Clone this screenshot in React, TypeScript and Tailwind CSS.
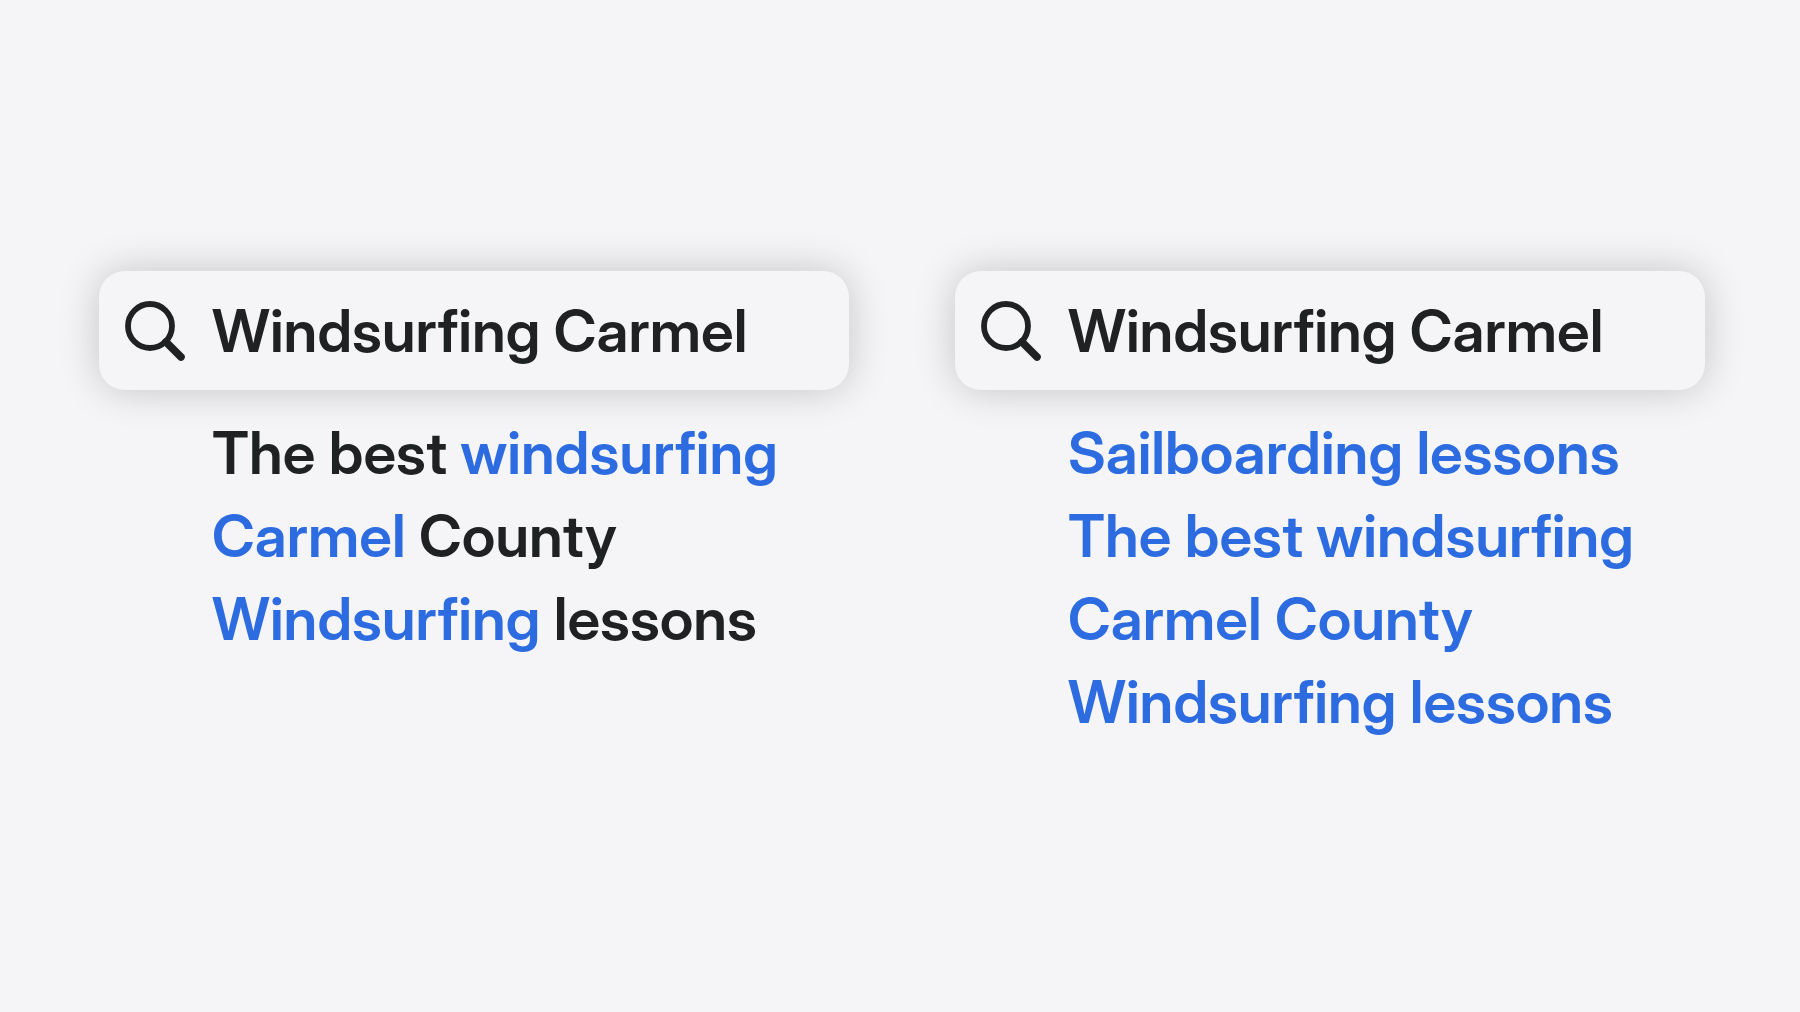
import type { ReactNode } from "react";

const BLUE = "text-[#2c6ce0]";

// Doubles as the label's text, so it carries its own accessible name.
function SearchIcon() {
  return (
    <svg viewBox="0 0 62 62" className="size-[62px] shrink-0" fill="none" stroke="currentColor" role="img" aria-label="Search">
      <circle cx="26" cy="26" r="22" strokeWidth="5.8" />
      <path d="M42 42 L57 57" strokeWidth="7.6" strokeLinecap="round" />
    </svg>
  );
}

function SearchPanel({ id, children }: { id: string; children: ReactNode }) {
  return (
    <section className="min-w-0 flex-1">
      <label
        htmlFor={id}
        className="flex h-[119px] items-center gap-[18px] rounded-[26px] bg-[#f5f5f7] pr-6 pl-[25px] shadow-[0_0_40px_rgba(0,0,0,0.2)]"
      >
        <SearchIcon />
        <input
          id={id}
          type="text"
          defaultValue="Windsurfing Carmel"
          className="h-full min-w-0 flex-1 bg-transparent px-2 leading-[83px] outline-none"
        />
      </label>
      <ul className="mt-[21px] pl-[113px] leading-[83px] whitespace-nowrap">{children}</ul>
    </section>
  );
}

export default function App() {
  return (
    <main className="flex min-h-screen gap-[106px] bg-[#f5f5f7] pt-[271px] pr-[95px] pl-[99px] font-['Inter_Display','Inter',sans-serif] text-[59px] font-semibold text-[#1f2123]">
      <SearchPanel id="exact-search">
        <li>
          The best <span className={BLUE}>windsurfing</span>
          <br />
          <span className={BLUE}>Carmel</span> County
        </li>
        <li>
          <span className={BLUE}>Windsurfing</span> lessons
        </li>
      </SearchPanel>
      <SearchPanel id="semantic-search">
        <li className={BLUE}>Sailboarding lessons</li>
        <li className={BLUE}>
          The best windsurfing
          <br />
          Carmel County
        </li>
        <li className={BLUE}>Windsurfing lessons</li>
      </SearchPanel>
    </main>
  );
}
